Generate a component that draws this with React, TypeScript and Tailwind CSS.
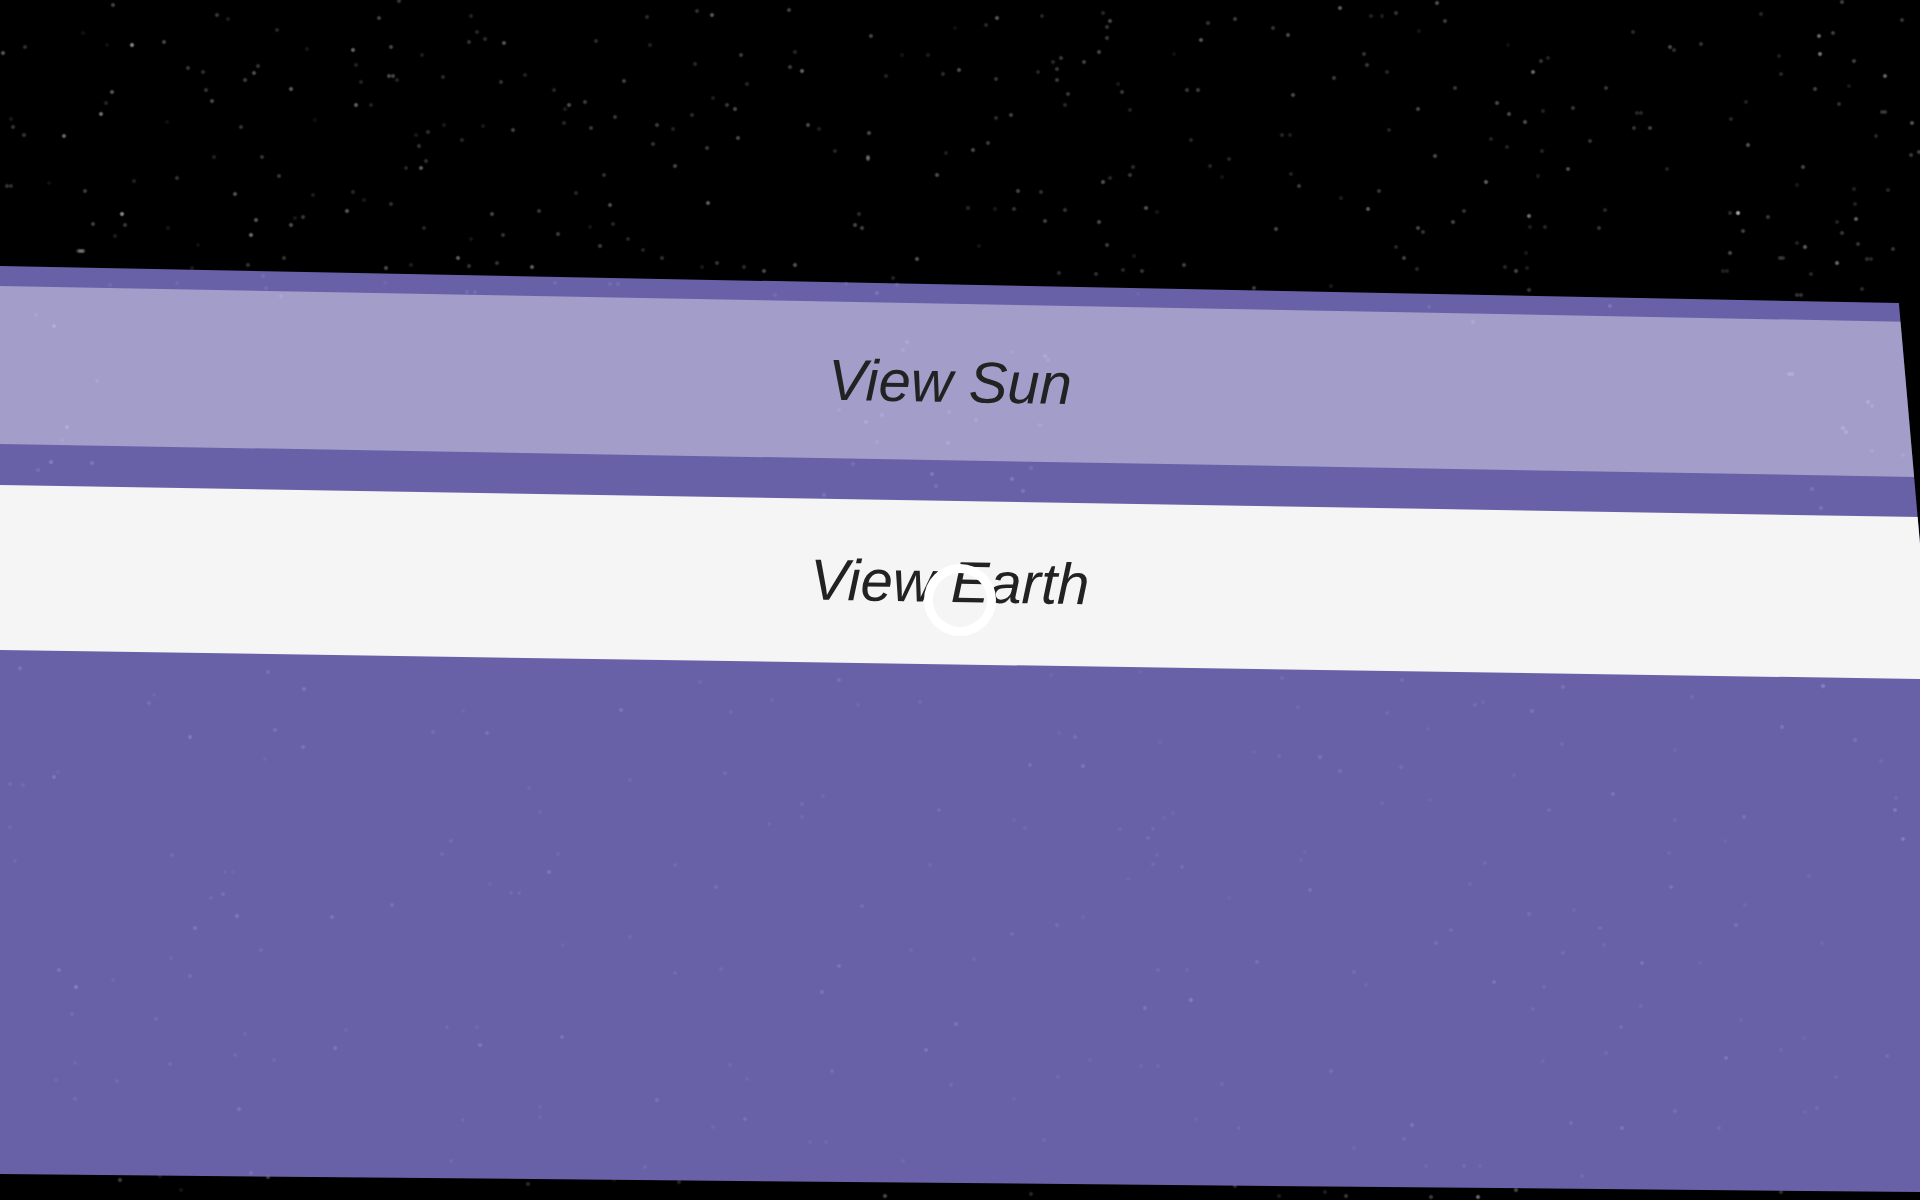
import React from "react";

type Sector = { x: number; y: number; sx: number; sy: number; stars: number[][] };

// Star catalogue by sky sector: [x, y, brightness in percent], in sector units.
const sectors: Sector[] = [
  {
    x: 0, y: 0, sx: 0.408, sy: 0.333,
    stars: [
      [278, 16, 30], [531, 45, 26], [559, 56, 14], [928, 55, 30], [978, 4, 26], [324, 136, 62], [401, 127, 32], [62, 140, 22], [7, 160, 40],
      [680, 91, 18], [1154, 48, 16], [1170, 95, 18], [1188, 116, 20], [1149, 126, 24], [1235, 128, 38], [1461, 123, 20], [864, 151, 46],
      [959, 142, 32], [872, 194, 16], [1034, 166, 14], [461, 204, 26], [498, 216, 22], [633, 198, 24], [622, 220, 36], [601, 241, 28],
      [714, 266, 42], [954, 229, 34], [963, 229, 32], [972, 240, 16], [886, 247, 16], [1087, 232, 20], [1229, 246, 24], [1286, 226, 16],
      [1530, 244, 30], [274, 276, 40], [261, 310, 16], [248, 342, 52], [504, 271, 24], [520, 304, 34], [872, 314, 44], [910, 314, 16],
      [1359, 271, 18], [1395, 316, 36], [1434, 306, 28], [1386, 326, 14], [1508, 352, 26], [1383, 370, 18], [1448, 383, 26], [33, 380, 24],
      [60, 404, 24], [156, 407, 48], [27, 356, 12], [590, 382, 24], [1048, 395, 22], [1089, 374, 12], [1133, 419, 18], [1258, 389, 30],
      [1184, 377, 12], [1020, 405, 12], [1026, 439, 24], [1043, 482, 22], [1032, 505, 42], [994, 504, 18], [525, 470, 16], [642, 472, 24],
      [685, 529, 26], [1480, 527, 22], [1412, 580, 18], [435, 535, 24], [328, 543, 16], [209, 573, 28], [17, 558, 24], [26, 558, 22],
      [575, 582, 38], [865, 577, 18], [768, 587, 14], [958, 614, 22], [851, 634, 40], [892, 600, 12], [299, 642, 64], [306, 676, 26],
      [229, 672, 30], [283, 710, 14], [628, 662, 40], [614, 707, 50], [713, 675, 36], [743, 653, 26], [724, 654, 12], [1322, 634, 26],
      [1206, 642, 32], [1496, 616, 36], [1502, 672, 18], [1040, 684, 18], [1232, 705, 24], [1367, 702, 28], [1471, 739, 28], [1540, 717, 18],
      [1445, 682, 10], [192, 753, 20], [201, 753, 18], [696, 776, 24], [607, 797, 24], [1123, 775, 44], [946, 805, 34], [1218, 789, 24],
      [1150, 798, 24], [1304, 802, 44], [1007, 796, 14], [470, 804, 12], [412, 685, 10], [410, 366, 8], [486, 737, 8], [1155, 718, 10],
      [120, 549, 8], [262, 135, 8], [204, 100, 8], [752, 147, 10], [773, 360, 8], [644, 830, 40], [433, 849, 30], [270, 857, 34],
      [651, 865, 40], [1145, 878, 44], [1164, 878, 44], [1360, 849, 40], [1496, 852, 40], [1514, 852, 40], [688, 888, 50], [944, 850, 26],
    ],
  },
  {
    x: 640, y: 0, sx: 0.408, sy: 0.333,
    stars: [
      [139, 34, 22], [177, 46, 40], [364, 29, 30], [17, 51, 20], [24, 136, 16], [248, 164, 28], [134, 193, 18], [379, 156, 18], [368, 201, 28],
      [397, 212, 46], [567, 109, 32], [875, 54, 40], [848, 74, 18], [986, 47, 18], [1134, 40, 18], [1153, 62, 34], [1145, 82, 24],
      [1144, 114, 26], [1126, 156, 32], [1393, 68, 24], [1375, 120, 40], [1458, 58, 28], [1551, 84, 24], [263, 251, 18], [178, 293, 14],
      [214, 315, 26], [233, 326, 34], [127, 345, 20], [42, 376, 28], [80, 386, 16], [31, 431, 24], [163, 445, 26], [239, 414, 34],
      [85, 498, 32], [411, 375, 34], [438, 386, 14], [561, 400, 34], [560, 470, 36], [560, 477, 34], [477, 453, 18], [781, 211, 36],
      [743, 221, 20], [602, 227, 16], [872, 236, 24], [976, 216, 18], [1012, 185, 18], [1032, 175, 26], [1023, 208, 26], [1022, 239, 28],
      [1088, 187, 30], [1050, 283, 26], [1041, 315, 18], [1181, 275, 26], [1172, 253, 12], [1200, 330, 16], [1341, 270, 26], [1368, 270, 28],
      [910, 344, 30], [873, 353, 20], [853, 430, 28], [815, 451, 34], [749, 460, 14], [729, 525, 36], [1350, 421, 18], [1444, 477, 18],
      [1397, 499, 18], [1427, 531, 10], [1209, 503, 20], [1201, 526, 26], [1134, 546, 38], [1153, 536, 18], [927, 575, 32], [984, 576, 22],
      [1041, 632, 24], [917, 629, 24], [869, 628, 12], [804, 626, 18], [992, 664, 30], [1239, 626, 38], [1126, 667, 34], [1268, 637, 10],
      [1560, 689, 32], [166, 610, 44], [537, 642, 20], [527, 675, 32], [545, 686, 30], [1145, 735, 28], [55, 776, 22], [8, 751, 16],
      [189, 790, 24], [256, 801, 20], [304, 815, 34], [381, 795, 38], [678, 779, 38], [152, 801, 12], [1028, 821, 20], [1118, 823, 22],
      [1183, 812, 18], [1230, 814, 24], [1334, 795, 30], [620, 834, 16], [1210, 769, 12], [706, 166, 14], [642, 164, 10], [771, 84, 8],
      [1310, 161, 8], [830, 738, 10], [1506, 865, 28], [581, 879, 60], [331, 885, 40], [630, 856, 34], [505, 852, 26], [1220, 884, 20],
    ],
  },
  {
    x: 1280, y: 0, sx: 0.408, sy: 0.333,
    stars: [
      [147, 24, 42], [386, 10, 36], [285, 38, 24], [222, 47, 16], [249, 47, 14], [405, 62, 28], [19, 104, 34], [206, 162, 24], [214, 195, 26],
      [133, 235, 28], [262, 217, 18], [32, 286, 34], [6, 404, 18], [25, 404, 14], [430, 265, 26], [339, 326, 32], [532, 310, 34],
      [561, 343, 34], [600, 366, 36], [621, 216, 48], [640, 184, 24], [658, 174, 16], [798, 264, 26], [718, 324, 26], [645, 334, 16],
      [864, 96, 20], [957, 140, 34], [966, 150, 22], [1031, 132, 24], [1180, 42, 18], [1377, 5, 30], [1320, 108, 48], [1356, 98, 28],
      [1324, 161, 54], [1407, 184, 30], [1228, 222, 18], [1224, 168, 14], [1483, 229, 46], [1525, 61, 24], [1312, 266, 30], [1371, 311, 22],
      [1395, 258, 12], [1476, 335, 24], [1484, 336, 24], [1548, 370, 38], [1460, 407, 18], [1547, 465, 26], [1565, 455, 30], [1148, 434, 38],
      [1106, 357, 18], [1141, 306, 16], [876, 340, 18], [885, 340, 18], [868, 383, 24], [906, 384, 30], [759, 423, 24], [707, 509, 36],
      [641, 453, 16], [557, 440, 16], [518, 417, 16], [633, 528, 14], [381, 468, 34], [504, 548, 44], [266, 390, 16], [27, 524, 16],
      [46, 558, 28], [243, 573, 26], [150, 594, 14], [216, 628, 42], [451, 634, 24], [424, 667, 32], [339, 686, 32], [350, 698, 24],
      [611, 650, 52], [649, 683, 18], [612, 682, 14], [797, 632, 18], [781, 686, 24], [949, 507, 16], [1282, 502, 32], [1266, 556, 12],
      [1406, 569, 16], [1489, 572, 18], [1410, 614, 16], [1123, 640, 80], [1104, 639, 20], [1197, 652, 26], [1412, 658, 44], [1366, 667, 16],
      [1378, 700, 26], [1135, 694, 30], [1287, 743, 42], [1268, 731, 16], [1417, 734, 24], [1502, 748, 24], [1102, 760, 34], [1225, 774, 24],
      [1233, 774, 22], [1365, 789, 48], [1439, 779, 22], [1448, 779, 18], [1302, 823, 18], [1087, 815, 16], [1095, 815, 16], [305, 774, 30],
      [284, 741, 18], [335, 807, 18], [579, 814, 32], [552, 803, 18], [606, 804, 14], [604, 759, 12], [610, 870, 24], [1426, 868, 20],
      [1268, 886, 24], [1277, 886, 24], [125, 859, 12], [341, 92, 10], [560, 134, 8], [810, 920, 70], [365, 921, 40], [472, 967, 60],
    ],
  },
  {
    x: 0, y: 660, sx: 0.612, sy: 0.344,
    stars: [
      [438, 34, 50], [33, 27, 24], [497, 84, 68], [244, 124, 54], [251, 101, 24], [310, 223, 80], [450, 203, 58], [495, 252, 60],
      [433, 287, 24], [88, 339, 70], [94, 325, 26], [17, 361, 40], [38, 363, 34], [17, 485, 34], [281, 566, 42], [24, 583, 30],
      [365, 680, 50], [345, 691, 34], [368, 617, 24], [381, 617, 22], [387, 743, 72], [319, 779, 68], [542, 747, 60], [641, 711, 54],
      [427, 844, 38], [279, 866, 30], [96, 902, 66], [124, 952, 96], [117, 1029, 42], [311, 918, 46], [184, 929, 26], [255, 1045, 38],
      [401, 1086, 30], [547, 1127, 68], [566, 1075, 24], [277, 1173, 40], [384, 1149, 34], [447, 1164, 34], [123, 1171, 28], [191, 1223, 34],
      [91, 1220, 26], [123, 1275, 36], [391, 1306, 64], [410, 1490, 52], [785, 1119, 68], [731, 1067, 34], [780, 1068, 28], [918, 1097, 60],
      [897, 617, 68], [912, 565, 30], [722, 563, 38], [737, 526, 40], [835, 678, 34], [848, 678, 34], [800, 651, 24], [920, 829, 24],
      [708, 208, 44], [795, 211, 54], [757, 149, 24], [1014, 144, 68], [865, 371, 26], [882, 443, 28], [1029, 350, 34], [1184, 329, 38],
      [1195, 150, 34], [1371, 59, 50], [1144, 65, 34], [1262, 117, 26], [1503, 122, 34], [1402, 131, 26], [1311, 418, 42], [1310, 455, 32],
      [1257, 477, 30], [1534, 435, 44], [1344, 395, 26], [1103, 597, 34], [1170, 660, 48], [1519, 595, 30], [1408, 715, 44], [1030, 805, 30],
      [1371, 889, 60], [1488, 843, 28], [1103, 909, 34], [1178, 899, 34], [1343, 965, 64], [1562, 1058, 60], [1513, 1134, 68], [1193, 1178, 30],
      [1220, 1218, 28], [1360, 1194, 48], [1554, 1236, 38], [1073, 1280, 56], [1218, 1335, 54], [882, 1300, 26], [882, 1328, 26],
      [756, 1338, 30], [737, 1456, 30], [1054, 1474, 38], [1323, 1400, 28], [1350, 1400, 28], [1165, 1358, 26], [1475, 1455, 26],
      [196, 1512, 30], [261, 1500, 12], [438, 1504, 30], [862, 1524, 20], [1109, 1516, 18], [1446, 1559, 34], [295, 1540, 10], [1003, 1513, 8],
    ],
  },
  {
    x: 960, y: 660, sx: 0.612, sy: 0.344,
    stars: [
      [149, 43, 24], [526, 53, 38], [723, 58, 44], [294, 35, 26], [985, 78, 58], [1410, 77, 60], [1196, 108, 38], [935, 148, 62],
      [842, 132, 40], [855, 121, 30], [698, 153, 34], [552, 138, 30], [188, 223, 50], [327, 239, 26], [161, 211, 24], [114, 306, 50],
      [201, 307, 66], [588, 282, 64], [621, 323, 50], [521, 280, 34], [480, 267, 28], [721, 310, 42], [765, 202, 24], [983, 243, 34],
      [1343, 194, 66], [1462, 232, 58], [1168, 262, 28], [1505, 293, 34], [906, 334, 26], [1067, 389, 64], [962, 435, 42], [1281, 455, 56],
      [1168, 464, 32], [1527, 437, 76], [1529, 400, 36], [1541, 521, 86], [1250, 526, 24], [689, 416, 30], [768, 406, 24], [107, 488, 30],
      [89, 465, 24], [261, 491, 26], [315, 492, 34], [308, 517, 40], [322, 566, 28], [315, 592, 34], [363, 603, 44], [333, 458, 24],
      [348, 444, 26], [558, 581, 28], [564, 557, 24], [572, 670, 54], [274, 637, 28], [440, 691, 20], [833, 652, 34], [858, 590, 34],
      [1161, 659, 60], [1159, 562, 32], [1387, 627, 32], [930, 739, 46], [1003, 728, 26], [1045, 779, 42], [1052, 829, 32], [803, 786, 42],
      [777, 823, 48], [985, 851, 42], [1115, 880, 62], [1268, 771, 54], [1283, 711, 28], [1408, 824, 26], [1209, 882, 24], [159, 771, 44],
      [85, 796, 42], [201, 748, 26], [23, 869, 32], [323, 901, 38], [371, 902, 32], [486, 879, 52], [643, 908, 38], [663, 944, 28],
      [378, 989, 88], [303, 1013, 64], [873, 937, 60], [954, 951, 34], [936, 1014, 34], [1112, 1005, 36], [1080, 1067, 44], [1276, 1046, 28],
      [1252, 1158, 66], [1055, 1142, 36], [953, 1165, 28], [1341, 1135, 30], [1379, 1099, 24], [1514, 1150, 44], [1431, 1213, 34],
      [606, 1196, 54], [428, 1232, 36], [160, 1213, 30], [89, 1276, 26], [213, 1163, 24], [296, 1179, 26], [324, 1179, 26], [739, 1353, 66],
      [725, 1392, 40], [998, 1345, 48], [1081, 1360, 66], [1169, 1310, 48], [1240, 1361, 34], [1400, 1301, 36], [1381, 1314, 24],
      [386, 1334, 26], [456, 1361, 30], [137, 1394, 30], [643, 1418, 28], [823, 1471, 38], [850, 1471, 28], [761, 1471, 26], [1017, 1500, 34],
      [450, 1530, 22], [116, 1551, 18], [521, 1557, 14], [631, 1559, 26], [770, 1561, 28], [846, 1562, 50], [908, 1541, 34], [1341, 1546, 22],
      [596, 1546, 14],
    ],
  },
  {
    x: 0, y: 240, sx: 0.333, sy: 0.333,
    stars: [[240, 33, 40], [249, 33, 34], [107, 224, 40], [162, 259, 90], [202, 563, 80], [186, 600, 34], [152, 668, 90], [113, 691, 50], [275, 671, 70], [290, 424, 50], [60, 1285, 50]],
  },
  {
    x: 1780, y: 280, sx: 0.333, sy: 0.333,
    stars: [[26, 282, 80], [36, 282, 80], [263, 365, 90], [275, 377, 60], [188, 444, 90], [198, 456, 80], [275, 515, 40], [368, 525, 40], [97, 627, 60], [124, 686, 60], [130, 1220, 60]],
  },
  {
    x: 780, y: 330, sx: 0.333, sy: 0.333,
    stars: [[381, 37, 60], [368, 60, 50], [795, 78, 70], [804, 89, 60], [698, 66, 40], [305, 254, 60], [258, 276, 70], [176, 240, 40], [507, 245, 50], [590, 271, 50], [780, 286, 50], [505, 338, 60], [291, 335, 40], [219, 403, 50], [457, 432, 80], [467, 467, 50], [696, 447, 80], [731, 484, 70], [755, 413, 50], [132, 495, 60]],
  },
];

function Starfield() {
  return (
    <svg className="absolute inset-0 h-full w-full" viewBox="0 0 1920 1200" preserveAspectRatio="xMidYMid slice" aria-hidden="true">
      <defs>
        <radialGradient id="star">
          <stop offset="0" stopColor="#fff2f2" />
          <stop offset="0.4" stopColor="#fff2f2" stopOpacity="0.7" />
          <stop offset="1" stopColor="#fff2f2" stopOpacity="0" />
        </radialGradient>
      </defs>
      {sectors.map((s, i) =>
        s.stars.map(([x, y, b], j) => (
          <circle
            key={`${i}-${j}`}
            cx={Math.round(s.x + x * s.sx)}
            cy={Math.round(s.y + y * s.sy)}
            r={3}
            fill="url(#star)"
            opacity={b / 100}
          />
        )),
      )}
    </svg>
  );
}

export default function App() {
  return (
    <main className="relative isolate min-h-screen overflow-hidden bg-black pt-[266px] pb-2 font-['Liberation_Sans',Arial,sans-serif] text-[#222222]">
      <Starfield />
      <section
        aria-label="Choose a view"
        className="relative flex min-h-[926px] flex-col gap-2 bg-[rgba(122,114,198,0.85)] pt-5 [clip-path:polygon(0_0,98.9%_37px,100%_278px,100%_100%,0_calc(100%_-_18px))]"
      >
        <button
          type="button"
          className="flex h-[191px] w-full items-center justify-center bg-[rgba(255,255,255,0.385)] pr-5 text-[58px] leading-none italic [clip-path:polygon(0_0,100%_36px,100%_100%,0_calc(100%_-_33px))]"
        >
          <span className="rotate-1">View Sun</span>
        </button>
        <button
          type="button"
          className="flex h-[194px] w-full items-center justify-center bg-[#f5f5f5] pr-5 text-[58px] leading-none italic [clip-path:polygon(0_0,100%_32px,100%_100%,0_calc(100%_-_29px))]"
        >
          <span className="rotate-1">View Earth</span>
        </button>
      </section>
      <div aria-hidden="true" className="pointer-events-none absolute inset-0 flex items-center justify-center">
        <div className="size-18 rounded-full border-9 border-white" />
      </div>
    </main>
  );
}
